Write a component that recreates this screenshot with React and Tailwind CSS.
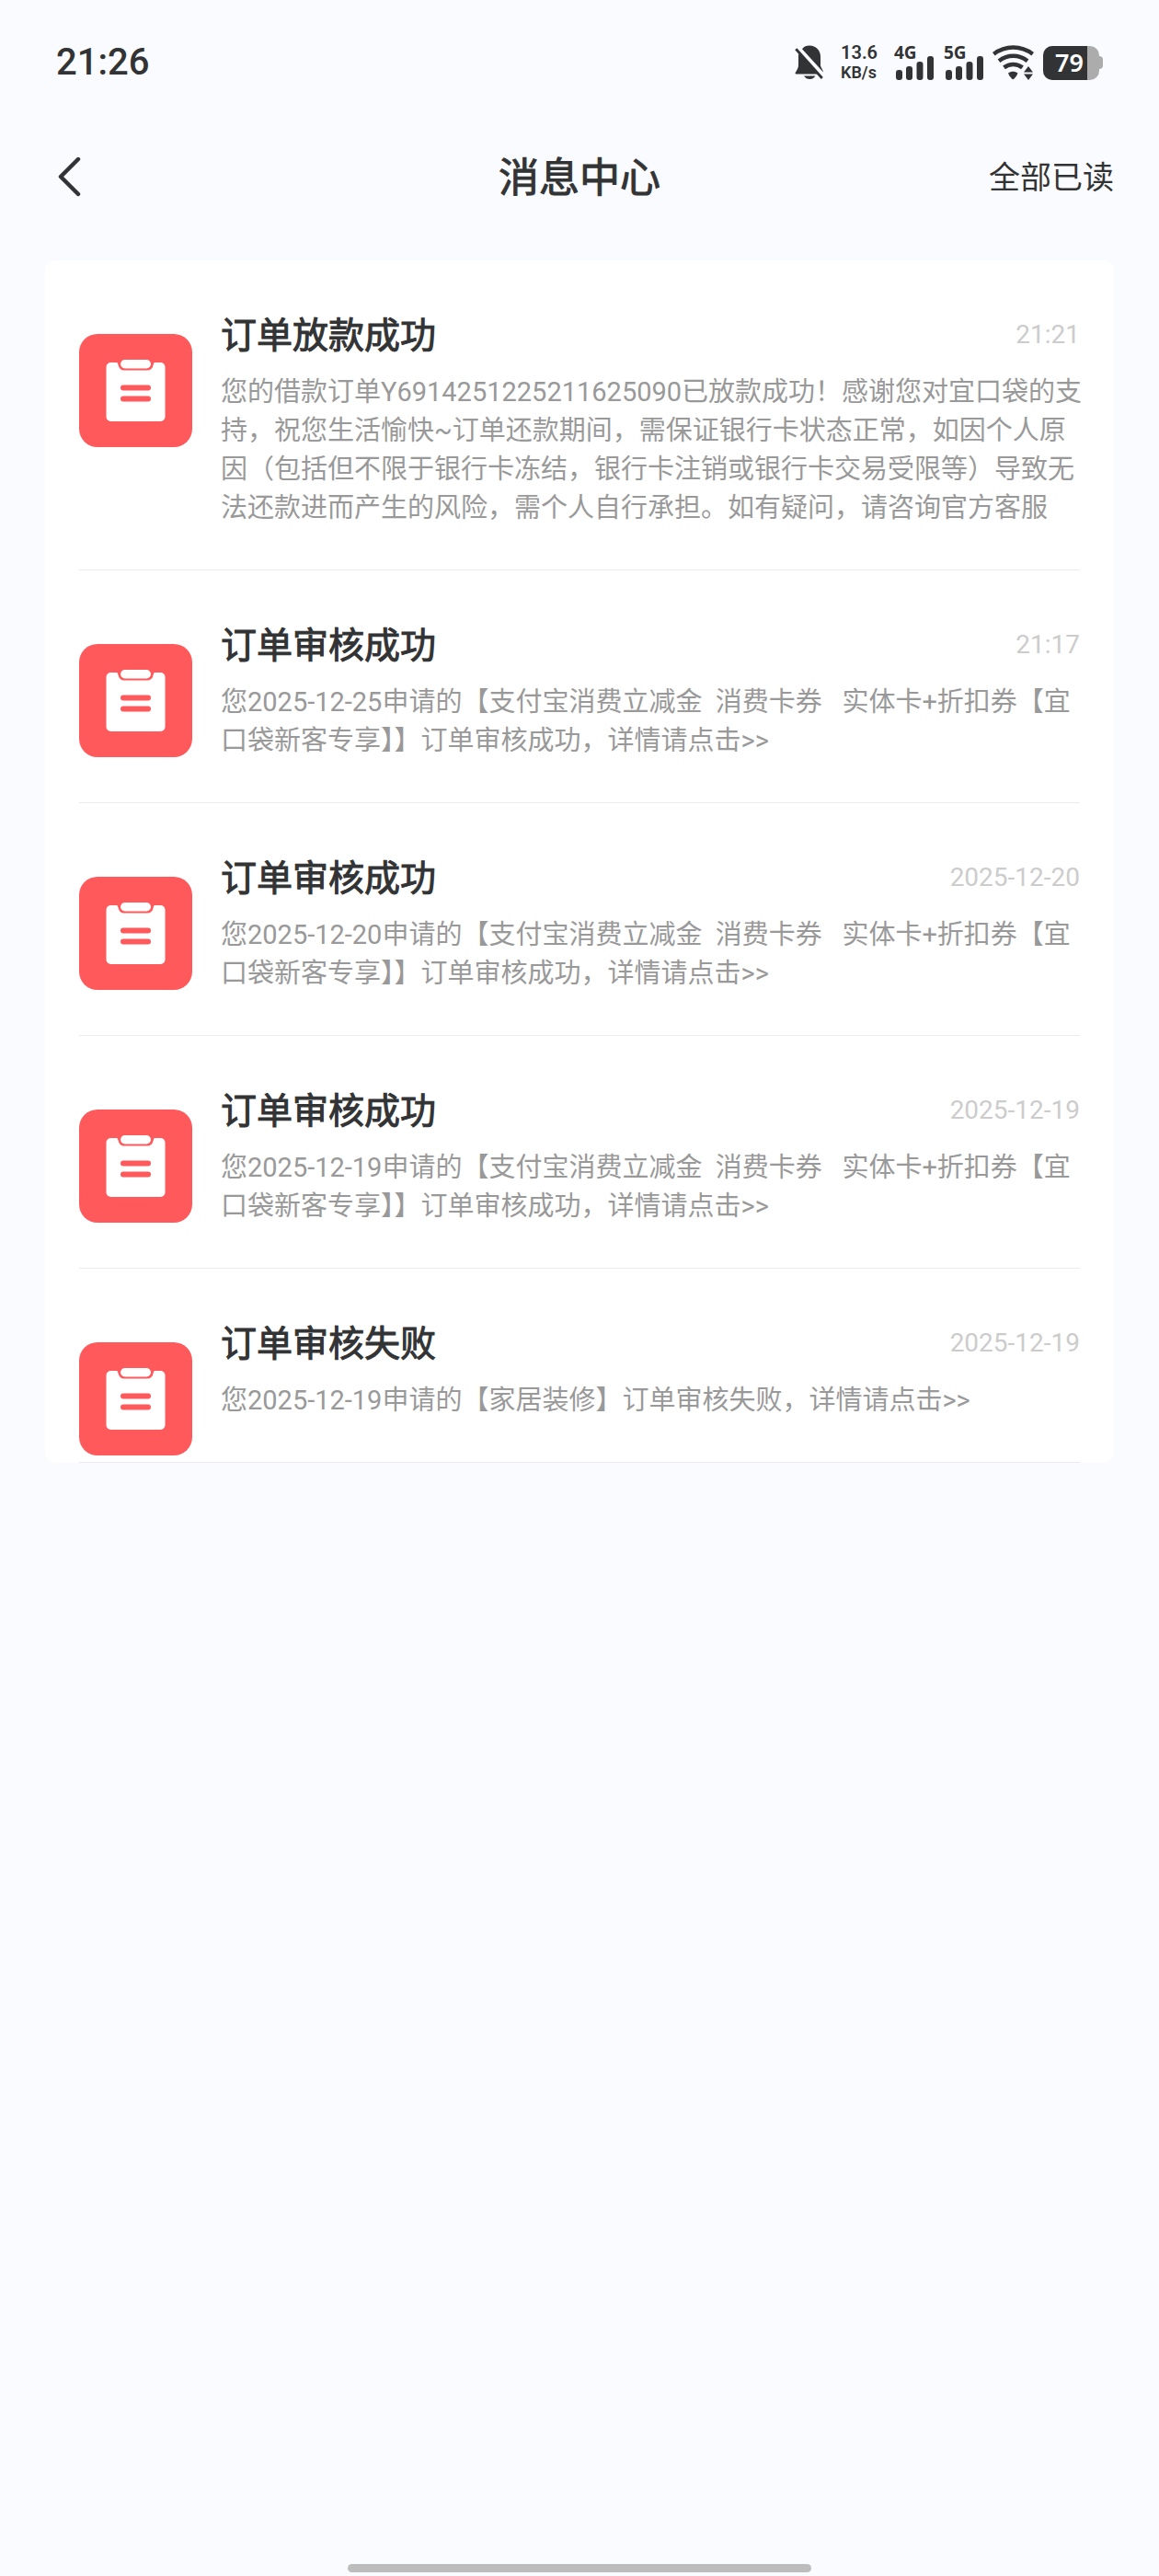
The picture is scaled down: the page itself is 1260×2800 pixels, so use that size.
import React from 'react';

const messages = [
  {
    id: 1,
    title: '订单放款成功',
    time: '21:21',
    body: '您的借款订单Y6914251225211625090已放款成功！感谢您对宜口袋的支\n持，祝您生活愉快~订单还款期间，需保证银行卡状态正常，如因个人原\n因（包括但不限于银行卡冻结，银行卡注销或银行卡交易受限等）导致无\n法还款进而产生的风险，需个人自行承担。如有疑问，请咨询官方客服',
  },
  {
    id: 2,
    title: '订单审核成功',
    time: '21:17',
    body: '您2025-12-25申请的【支付宝消费立减金  消费卡券   实体卡+折扣券【宜\n口袋新客专享】】订单审核成功，详情请点击>>',
  },
  {
    id: 3,
    title: '订单审核成功',
    time: '2025-12-20',
    body: '您2025-12-20申请的【支付宝消费立减金  消费卡券   实体卡+折扣券【宜\n口袋新客专享】】订单审核成功，详情请点击>>',
  },
  {
    id: 4,
    title: '订单审核成功',
    time: '2025-12-19',
    body: '您2025-12-19申请的【支付宝消费立减金  消费卡券   实体卡+折扣券【宜\n口袋新客专享】】订单审核成功，详情请点击>>',
  },
  {
    id: 5,
    title: '订单审核失败',
    time: '2025-12-19',
    body: '您2025-12-19申请的【家居装修】订单审核失败，详情请点击>>',
  },
];

function BellOffIcon() {
  return (
    <svg width="32" height="38" viewBox="0 0 32 38" fill="currentColor" aria-hidden="true">
      <path d="M8 4.2C10 1.6 12.800 0.500 16 0.500c7 0 12 5 12 12v9.500c0 1.600 2.800 5 3 7.500L8 4.200z" />
      <path d="M4.300 9.200L25.500 31.500H1.500c-.8 0-1.200-.7-.8-1.400 1.300-2.600 3.300-5 3.300-8.100V12c0-1 .1-1.900.3-2.800z" />
      <path d="M10 33.500h12.500c-1.500 2.400-3.700 3.500-6.200 3.500s-4.800-1.100-6.300-3.500z" />
      <path d="M1.300 4.300L29.800 36" stroke="currentColor" strokeWidth="2.800" fill="none" />
    </svg>
  );
}

function Signal({ label }) {
  return (
    <div className="relative">
      <svg width="43" height="38" viewBox="0 0 43 38" fill="currentColor" aria-hidden="true">
        <rect x="2" y="27" width="7" height="11" rx="3" />
        <rect x="13" y="23" width="7" height="15" rx="3" />
        <rect x="24.500" y="18" width="7" height="20" rx="3" />
        <rect x="36" y="12" width="7" height="26" rx="3" />
      </svg>
      <span className="absolute top-0 left-0 font-['Noto_Sans'] text-[19px] leading-4 font-bold">
        {label}
      </span>
    </div>
  );
}

function WifiIcon() {
  return (
    <svg width="45" height="38" viewBox="0 0 45 38" aria-hidden="true">
      <g fill="none" stroke="currentColor" strokeWidth="4.500">
        <path d="M1.300 9.800C14 .2 31 .2 43.700 9.800" />
        <path d="M7 17.200c9.500-7.200 21.500-7.200 31 0" />
        <path d="M12.500 24.400c6-4.600 14-4.600 20 0" />
      </g>
      <path d="M17 30.500c3.200-2.200 7.300-2.200 10.500 0l-1.300 2.800-2.600 3.200c-.8.9-1.900.9-2.700 0l-2.600-3.200z" fill="currentColor" />
      <path d="M39 23l5 6.500H34zM39 38l5-6.500H34z" fill="currentColor" />
    </svg>
  );
}

function Battery({ level }) {
  return (
    <div className="flex items-center">
      <div className="relative h-[37px] w-[61px] overflow-hidden rounded-[10px] bg-[#acacac]">
        <div className="h-full bg-[#323334]" style={{ width: `${level}%` }} />
        <span className="absolute inset-0 flex items-center justify-center pr-1 font-['Noto_Sans'] text-[27px] font-semibold text-white">
          {level}
        </span>
      </div>
      <div className="h-3.5 w-1 rounded-r-sm bg-[#acacac]" />
    </div>
  );
}

function StatusBar() {
  return (
    <div className="flex h-[136px] items-center px-[61px]">
      <span className="text-[40px] leading-none font-medium">21:26</span>
      <div className="ml-auto flex items-center">
        <BellOffIcon />
        <div className="mx-[18px] flex flex-col items-start font-semibold">
          <span className="text-xl leading-[22px]">13.6</span>
          <span className="text-lg leading-[22px]">KB/s</span>
        </div>
        <div className="flex gap-[11px]">
          <Signal label="4G" />
          <Signal label="5G" />
        </div>
        <div className="ml-2.5 flex items-center gap-2.5">
          <WifiIcon />
          <Battery level={79} />
        </div>
      </div>
    </div>
  );
}

function Header() {
  return (
    <header className="grid h-[114px] grid-cols-[1fr_auto_1fr] items-center px-[49px]">
      <button type="button" aria-label="返回" className="justify-self-start px-3">
        <svg width="28" height="44" viewBox="0 0 28 44" fill="none" aria-hidden="true">
          <path
            d="M24 2L5 21l19 19"
            stroke="currentColor"
            strokeWidth="4.500"
            strokeLinecap="round"
            strokeLinejoin="round"
          />
        </svg>
      </button>
      <h1 className="pt-0.5 text-[44px] leading-none [-webkit-text-stroke:1px]">消息中心</h1>
      <button type="button" className="justify-self-end text-[34px] leading-none">
        全部已读
      </button>
    </header>
  );
}

function OrderIcon() {
  return (
    <svg className="mt-8 shrink-0" width="123" height="123" viewBox="0 0 123 123" aria-hidden="true">
      <rect width="123" height="123" rx="20" fill="#ff595c" />
      <rect x="29.500" y="31" width="64" height="64" rx="5" fill="#fff" />
      <path d="M40 30h43c-1.500.8-2 2-2.300 3.500-.8 4-3 6-6.700 6H49.500c-4 0-6-2-7-6-.4-1.500-1-2.700-2.500-3.500z" fill="#ff595c" />
      <rect x="45" y="28" width="33" height="9.500" rx="4.750" fill="#fff" />
      <g stroke="#ff595c" strokeWidth="6" strokeLinecap="round">
        <path d="M48 58.500h27M48 70.500h27" />
      </g>
    </svg>
  );
}

function MessageItem({ message }) {
  return (
    <li className="flex gap-[31px] border-b border-[#ececec] pt-12">
      <OrderIcon />
      <div className="min-w-0 flex-1 pt-0.5 pb-[46px]">
        <div className="flex items-center justify-between">
          <h2 className="text-[39px] leading-[64px] [-webkit-text-stroke:1px]">{message.title}</h2>
          <time className="pb-0.5 text-[28px] text-[#cccccc]">{message.time}</time>
        </div>
        <p className="mt-2 -mr-4 text-[29px] leading-[42px] break-all whitespace-pre-wrap text-[#999999]">
          {message.body}
        </p>
      </div>
    </li>
  );
}

export default function App() {
  return (
    <div className="flex min-h-screen flex-col bg-[#fafbff] font-[Roboto,'Noto_Sans_CJK_SC',sans-serif] text-[#323334]" lang="zh-CN">
      <StatusBar />
      <Header />
      <main className="mt-[33px] px-[49px]">
        <ul className="rounded-xl bg-white px-[37px]">
          {messages.map((message) => (
            <MessageItem key={message.id} message={message} />
          ))}
        </ul>
      </main>
      {/* Gesture bar */}
      <div className="mx-auto mt-auto mb-1 h-[9px] w-2/5 rounded-full bg-[#bdbdbd]" />
    </div>
  );
}
